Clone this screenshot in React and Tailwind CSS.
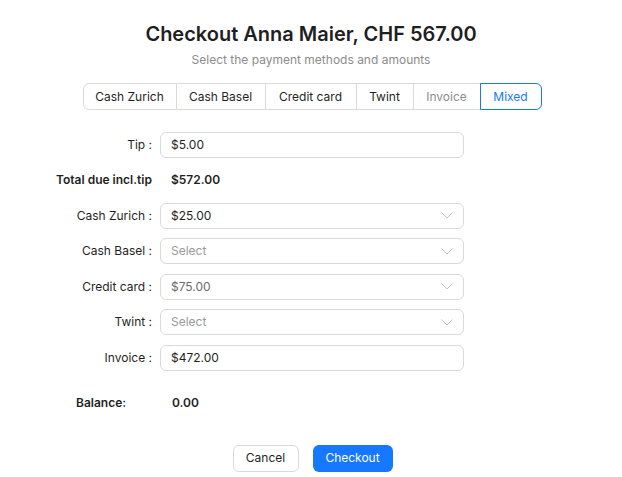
import React from "react";

const font = { fontFamily: "Inter, 'Noto Sans', sans-serif" };

function Row({ label, children }) {
  return (
    <div className="flex h-[35.5px] items-center">
      <div className="w-[153px] pr-[1px] text-right text-[12px] text-[#1f1f1f]">{label}</div>
      <div className="ml-[7px] w-[304px]">{children}</div>
    </div>
  );
}

function Input({ value }) {
  return (
    <div className="flex h-[26px] items-center rounded-[6px] border border-[#d9d9d9] bg-white px-[10px] text-[12px] text-[#1f1f1f]">
      {value}
    </div>
  );
}

function Chevron() {
  return (
    <svg width="12" height="7" viewBox="0 0 12 7" fill="none" className="block">
      <path d="M0.5 0.5 L6 6 L11.5 0.5" stroke="#c4c4c4" strokeWidth="1" />
    </svg>
  );
}

function Select({ value, placeholder, muted }) {
  return (
    <div className="flex h-[26px] items-center justify-between rounded-[6px] border border-[#d9d9d9] bg-white pl-[10px] pr-[10px] text-[12px]">
      <span className={placeholder ? "text-[#999999]" : muted ? "text-[#6b6b6b]" : "text-[#1f1f1f]"}>
        {value}
      </span>
      <Chevron />
    </div>
  );
}

export default function App() {
  const tabs = [
    { t: "Cash Zurich", w: "w-[94px]" },
    { t: "Cash Basel", w: "w-[89px]" },
    { t: "Credit card", w: "w-[91px]" },
    { t: "Twint", w: "w-[57px]" },
    { t: "Invoice", w: "w-[67px]" },
  ];
  return (
    <div className="min-h-[477px] w-[622px] bg-white" style={font}>
      <div className="flex flex-col items-center pt-[20px]">
        <h1 className="text-[20px] font-semibold leading-[28px] text-[#1f1f1f]">
          Checkout Anna Maier, CHF 567.00
        </h1>
        <p className="mt-[3px] text-[12px] leading-[18px] text-[#8c8c8c]">
          Select the payment methods and amounts
        </p>
        <div className="mt-[14px] flex h-[27px] pl-[2px] text-[12px]">
          {tabs.map((tab, i) => (
            <div
              key={tab.t}
              className={`${tab.w} flex items-center justify-center border-y border-r border-[#d9d9d9] ${
                i === 0 ? "rounded-l-[6px] border-l" : ""
              } ${tab.t === "Invoice" ? "text-[#8c8c8c]" : "text-[#1f1f1f]"}`}
            >
              {tab.t}
            </div>
          ))}
          <div className="relative z-10 -ml-px flex w-[62px] items-center justify-center rounded-r-[6px] border border-[#1677ff] text-[#1677ff]">
            Mixed
          </div>
        </div>
      </div>

      <div className="mt-[17px]">
        <Row label="Tip :">
          <Input value="$5.00" />
        </Row>
        <div className="flex h-[35.5px] items-center text-[12px] font-semibold text-[#1f1f1f]">
          <div className="w-[171px] pl-[56px] whitespace-nowrap">Total due incl.tip</div>
          <div>$572.00</div>
        </div>
        <Row label="Cash Zurich :">
          <Select value="$25.00" />
        </Row>
        <Row label="Cash Basel :">
          <Select value="Select" placeholder />
        </Row>
        <Row label="Credit card :">
          <Select value="$75.00" muted />
        </Row>
        <Row label="Twint :">
          <Select value="Select" placeholder />
        </Row>
        <Row label="Invoice :">
          <Input value="$472.00" />
        </Row>
        <div className="mt-[9.5px] flex h-[35.5px] items-center text-[12px] font-semibold text-[#1f1f1f]">
          <div className="w-[172px] pl-[76px]">Balance:</div>
          <div>0.00</div>
        </div>
      </div>

      <div className="mt-[24px] flex justify-center gap-[14px] pl-[3px] text-[12px]">
        <button className="h-[27px] w-[66px] rounded-[6px] border border-[#d9d9d9] bg-white text-[#1f1f1f]">
          Cancel
        </button>
        <button className="h-[27px] w-[80px] rounded-[6px] bg-[#1677ff] text-white">
          Checkout
        </button>
      </div>
    </div>
  );
}
